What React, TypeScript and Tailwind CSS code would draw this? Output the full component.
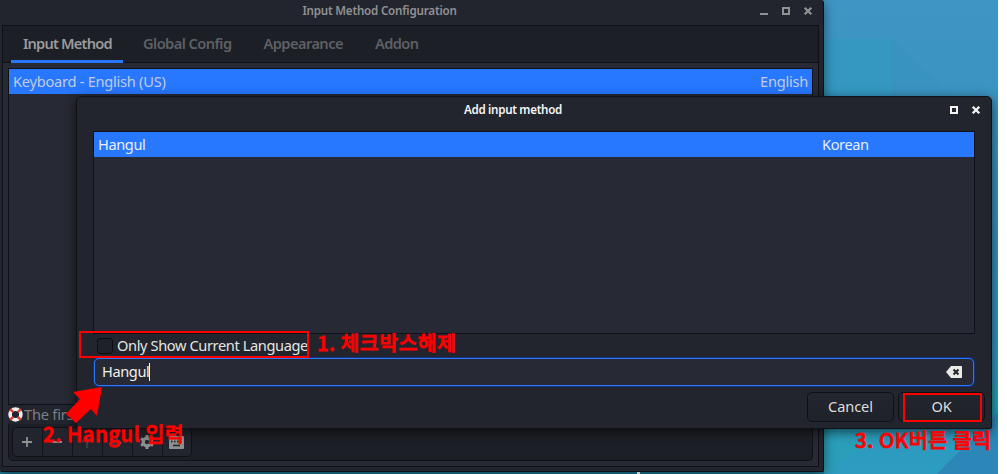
import { ReactNode } from "react";

interface TabProps {
  label: string;
  active?: boolean;
}

function Tab({ label, active = false }: TabProps) {
  return (
    <div
      className={
        active
          ? "flex h-[37px] w-[112px] items-center border-b-[3px] border-[#2777ff] px-3 pt-[2px] tracking-[-0.8px] text-[#9a9a9c]"
          : "flex h-[37px] items-center border-b-[3px] border-transparent px-3 pt-[2px] tracking-[-0.55px] text-[#5d6064]"
      }
    >
      {label}
    </div>
  );
}

function MinimizeIcon() {
  return (
    <svg className="h-[10px] w-[10px]" viewBox="0 0 10 10">
      <rect x="1" y="7" width="8" height="2" fill="currentColor" />
    </svg>
  );
}

function MaximizeIcon() {
  return (
    <svg className="h-[10px] w-[10px]" viewBox="0 0 10 10">
      <rect x="2" y="2" width="6" height="6" fill="none" stroke="currentColor" strokeWidth="2" />
    </svg>
  );
}

function CloseIcon() {
  return (
    <svg className="h-[10px] w-[10px]" viewBox="0 0 10 10">
      <path d="M1.7 1.7 8.3 8.3M8.3 1.7 1.7 8.3" stroke="currentColor" strokeWidth="2.3" />
    </svg>
  );
}

function LifebuoyIcon() {
  return (
    <svg className="h-[15px] w-[15px] shrink-0" viewBox="0 0 15 15">
      <circle cx="7.5" cy="7.5" r="5.4" fill="none" stroke="#f0eeee" strokeWidth="3.6" />
      <path
        d="M2.200 2.200 5.200 5.200M12.800 2.200 9.800 5.200M12.800 12.800 9.800 9.800M2.200 12.800 5.200 9.800"
        stroke="#d8463a"
        strokeWidth="2.600"
      />
    </svg>
  );
}

function ToolButton({ children }: { children?: ReactNode }) {
  return (
    <div className="flex w-[30px] items-center justify-center border-r border-[#121419] pr-px">
      {children}
    </div>
  );
}

function ConfigWindow() {
  return (
    <div className="absolute top-0 left-0 flex h-[472px] w-[824px] flex-col rounded-tr-[3px] rounded-b-[2px] border-r border-b border-[#101116] bg-[#22252d] shadow-[0_3px_12px_rgba(0,0,0,0.5)]">
      {/* Title bar */}
      <div className="flex h-[25px] shrink-0 items-center pr-[10px] text-[#909194]">
        <div className="flex-1 pb-[3px] text-center text-[11.6px] font-semibold tracking-[-0.2px]">
          Input Method Configuration
        </div>
        <div className="flex gap-3 pb-[3px]">
          <MinimizeIcon />
          <MaximizeIcon />
          <CloseIcon />
        </div>
      </div>

      <div className="mr-[4px] ml-[2px] flex h-[442px] flex-col border border-[#101116] bg-[#272934]">
        {/* Tabs */}
        <div className="flex h-[37px] shrink-0 gap-2 border-b border-[#101116] bg-[#1c1f26] pl-2 text-[14.6px] font-semibold">
          <Tab label="Input Method" active />
          <Tab label="Global Config" />
          <Tab label="Appearance" />
          <Tab label="Addon" />
        </div>

        {/* Current input methods */}
        <div className="mx-[5px] mt-[5px] h-[337px] shrink-0 border border-[#101116]">
          <div className="flex h-[25px] items-center justify-between bg-[#2777ff] px-1 text-[14.6px] tracking-[-0.25px] text-[#c3cbdc]">
            <span>Keyboard - English (US)</span>
            <span>English</span>
          </div>
        </div>
        <div className="mx-[5px] flex h-[19px] shrink-0 items-center gap-px bg-[#22252d] text-[14.6px] tracking-[-0.2px] text-[#7c7e82]">
          <LifebuoyIcon />
          <span>The first</span>
        </div>

        {/* Toolbar */}
        <div className="mx-[5px] flex h-[37px] shrink-0 rounded-b-[5px] border border-t-0 border-[#101116] bg-[#1c1f26] pt-[3px] pl-[3px]">
          <div className="flex h-[30px] w-[180px] rounded-[5px] border border-[#101116] bg-[#22252d] text-[#8e9092]">
            <ToolButton>
              <svg className="h-[10px] w-[10px]" viewBox="0 0 10 10">
                <path d="M5 0v10M0 5h10" stroke="currentColor" strokeWidth="1.8" />
              </svg>
            </ToolButton>
            <ToolButton>
              <svg className="h-[10px] w-[10px]" viewBox="0 0 10 10">
                <path d="M0 5h10" stroke="currentColor" strokeWidth="1.8" />
              </svg>
            </ToolButton>
            <ToolButton>
              <svg className="h-[12px] w-[12px] text-[#3f4248]" viewBox="0 0 12 12">
                <path d="M6 12V2M1.5 6 6 1.5 10.5 6" fill="none" stroke="currentColor" strokeWidth="1.8" />
              </svg>
            </ToolButton>
            <ToolButton>
              <svg className="h-[12px] w-[12px] text-[#3f4248]" viewBox="0 0 12 12">
                <path d="M6 0v10M1.5 6 6 10.5 10.5 6" fill="none" stroke="currentColor" strokeWidth="1.8" />
              </svg>
            </ToolButton>
            <ToolButton>
              <svg className="h-[14px] w-[14px]" viewBox="0 0 14 14">
                <circle cx="7" cy="7" r="3.8" fill="none" stroke="currentColor" strokeWidth="3.2" />
                <path
                  d="M7 0v2.5M7 11.5V14M1 3.5l2 1.2M11 9.3l2 1.2M13 3.5l-2 1.2M3 9.3l-2 1.2"
                  stroke="currentColor"
                  strokeWidth="3"
                />
              </svg>
            </ToolButton>
            <div className="flex flex-1 items-center justify-center pr-px">
              <svg className="h-[13px] w-[15px]" viewBox="0 0 15 13">
                <rect x="0" y="0" width="15" height="13" rx="1" fill="currentColor" />
                <path
                  d="M2 2.5h1.5M5 2.5h1.5M8 2.5h1.5M11 2.5h2M2 5.5h1.5M5 5.5h1.5M8 5.5h1.500M11 5.5h2M4 9.500h7"
                  stroke="#22252d"
                  strokeWidth="1.4"
                />
              </svg>
            </div>
          </div>
        </div>
      </div>
    </div>
  );
}

function DialogButton({ label }: { label: string }) {
  return (
    <button className="h-[30px] w-[87px] rounded-[5px] border border-[#0e1014] bg-linear-to-b from-[#23262e] to-[#1f2229] text-center text-[14.6px] tracking-[-0.1px] text-[#dddddc]">
      {label}
    </button>
  );
}

function AddInputDialog() {
  return (
    <div className="absolute top-[96px] left-[76px] flex h-[333px] w-[916px] flex-col rounded-t-[5px] rounded-b-[2px] border border-[#101116] bg-[#22252d] shadow-[0_3px_12px_rgba(0,0,0,0.6)]">
      {/* Title bar */}
      <div className="flex h-[34px] shrink-0 items-start pt-[4px] pr-[10px] text-[#f4f4f2]">
        <div className="flex-1 text-center text-[11.6px] leading-[17px] font-semibold tracking-[-0.3px]">
          Add input method
        </div>
        <div className="flex gap-3 pt-[4px]">
          <MaximizeIcon />
          <CloseIcon />
        </div>
      </div>

      {/* Available input methods */}
      <div className="mr-[16px] ml-[16px] h-[203px] shrink-0 border border-[#101116] bg-[#272934]">
        <div className="flex h-[25px] items-center bg-[#2777ff] pl-1 text-[14.6px] tracking-[-0.4px] text-[#e9eefa]">
          <span className="w-[724px]">Hangul</span>
          <span>Korean</span>
        </div>
      </div>

      <div className="flex h-[24px] shrink-0 items-center gap-1 pl-[20px] text-[14.6px] tracking-[-0.38px] text-[#e4e4e2]">
        <span className="h-4 w-4 rounded-[3px] border border-[#0c0d10] bg-[#1e2128]" />
        <span>Only Show Current Language</span>
      </div>

      {/* Search entry */}
      <div className="mr-[17px] ml-[17px] flex h-[28px] shrink-0 items-center justify-between rounded-[5px] border border-[#2777ff] bg-[#272934] pr-[11px] pl-[7px] text-[14.6px] tracking-[-0.4px] text-[#f0f0ee] shadow-[0_0_0_1px_#14337a]">
        <span className="flex h-[18px] items-center border-r border-white">Hangul</span>
        <svg className="h-[12px] w-[16px]" viewBox="0 0 16 12">
          <path d="M0 6 5 0h11v12H5z" fill="#e9e9e6" />
          <path d="M7.5 3.5l5 5M12.5 3.5l-5 5" stroke="#22252d" strokeWidth="2" />
        </svg>
      </div>

      <div className="mt-[6px] flex shrink-0 justify-end gap-1 pr-[6px]">
        <DialogButton label="Cancel" />
        <DialogButton label="OK" />
      </div>
    </div>
  );
}

export default function App() {
  return (
    <div className="h-[474px] w-[1007px] overflow-hidden bg-white font-['Noto_Sans','Noto_Sans_CJK_KR',sans-serif] whitespace-nowrap">
      <div className="relative h-[474px] w-[998px] overflow-hidden bg-[#3398c2]">
        {/* Wallpaper */}
        <svg className="absolute inset-0 h-full w-full" viewBox="0 0 998 474">
          <defs>
            <linearGradient id="sky" x1="0" y1="0" x2="0" y2="1">
              <stop offset="0" stopColor="#3f96c4" />
              <stop offset="0.5" stopColor="#3590c0" />
              <stop offset="1" stopColor="#2c9cc0" />
            </linearGradient>
          </defs>
          <rect width="998" height="474" fill="url(#sky)" />
          <path d="M824 39H891V96H824z" fill="#3498c1" />
          <path d="M891 39H998V96H950z" fill="#3b94c2" />
          <path d="M891 39 950 96H891z" fill="#3993c1" />
          <path d="M824 429H890L824 474z" fill="#2b9fba" />
          <path d="M998 412V474H937z" fill="#2c86b8" />
          <path d="M992 380 998 388V412L992 418z" fill="#239fb5" />
          <rect y="471" width="824" height="3" fill="#1f829f" />
        </svg>

        <ConfigWindow />
        <AddInputDialog />
        <div className="absolute top-[472px] left-[637px] h-[2px] w-[3px] bg-[#c8c8c0]" />

        {/* Step marks */}
        <div className="absolute top-[331px] left-[79px] h-[27px] w-[230px] border-2 border-[#fe0000]" />
        <div className="absolute top-[393px] left-[903px] h-[29px] w-[79px] border-2 border-[#fe0000]" />
        <svg className="absolute top-[387px] left-[66px] h-[36px] w-[36px]" viewBox="0 0 36 36">
          <path d="M36 0 31 29 25 22 10 36 0 27 14 12 7 5z" fill="#fe0000" />
        </svg>
        <div className="absolute top-[329px] left-[317px] font-['Noto_Sans_CJK_KR',sans-serif] text-[20.5px] leading-[27px] font-medium tracking-[0.4px] text-[#fe0000] [-webkit-text-stroke:0.8px_#fe0000]">
          1. 체크박스해제
        </div>
        <div className="absolute top-[420px] left-[43px] font-['Noto_Sans_CJK_KR',sans-serif] text-[20.5px] leading-[27px] font-medium tracking-[0.5px] text-[#fe0000] [-webkit-text-stroke:0.8px_#fe0000]">
          2. Hangul 입력
        </div>
        <div className="absolute top-[426px] left-[855px] font-['Noto_Sans_CJK_KR',sans-serif] text-[20.5px] leading-[27px] font-medium tracking-[0.5px] text-[#fe0000] [-webkit-text-stroke:0.8px_#fe0000]">
          3. OK버튼 클릭
        </div>
      </div>
    </div>
  );
}
